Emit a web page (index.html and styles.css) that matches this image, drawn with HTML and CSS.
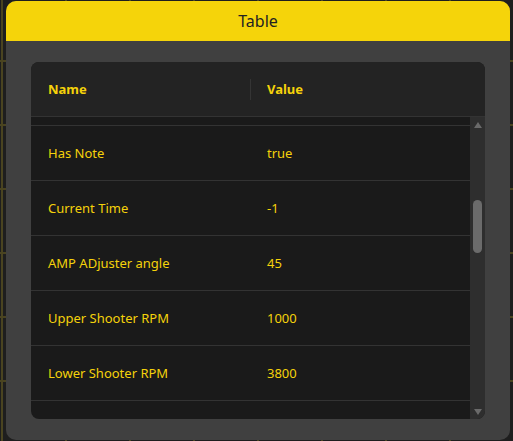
FILE: index.html
```html
<!DOCTYPE html>
<html>
<head>
<meta charset="utf-8">
<link rel="stylesheet" href="styles.css">
</head>
<body>
<div class="window">
  <div class="titlebar">Table</div>
  <div class="content">
    <div class="table">
      <div class="thead">
        <div class="cell name">Name</div>
        <div class="divider"></div>
        <div class="cell value">Value</div>
      </div>
      <div class="tbody">
        <div class="rows">
          <div class="rows-inner">
            <div class="row"></div>
            <div class="row"><div class="cell name">Has Note</div><div class="cell value">true</div></div>
            <div class="row"><div class="cell name">Current Time</div><div class="cell value">-1</div></div>
            <div class="row"><div class="cell name">AMP ADjuster angle</div><div class="cell value">45</div></div>
            <div class="row"><div class="cell name">Upper Shooter RPM</div><div class="cell value">1000</div></div>
            <div class="row"><div class="cell name">Lower Shooter RPM</div><div class="cell value">3800</div></div>
            <div class="row"></div>
          </div>
        </div>
        <div class="scrollbar">
          <div class="arrow up"></div>
          <div class="track"><div class="thumb"></div></div>
          <div class="arrow down"></div>
        </div>
      </div>
    </div>
  </div>
</div>
</body>
</html>
```
FILE: styles.css
```css
html, body {
  margin: 0;
  padding: 0;
}
body {
  width: 513px;
  height: 441px;
  overflow: hidden;
  background-color: #1e1e1e;
  background-image:
    linear-gradient(to right, #4a4420 0, #4a4420 2px, transparent 2px),
    linear-gradient(to bottom, #4a4420 0, #4a4420 2px, transparent 2px);
  background-size: 64px 64px, 64px 64px;
  background-position: 1px 0, 0 60px;
  font-family: "Noto Sans", "Open Sans", sans-serif;
}
.window {
  margin: 1px 0 0 6px;
  width: 504px;
  height: 439px;
  border-radius: 10px;
  background: #404040;
  overflow: hidden;
  display: flex;
  flex-direction: column;
}
.titlebar {
  height: 40px;
  flex: none;
  background: #f5d40a;
  color: #222222;
  font-size: 16px;
  display: flex;
  align-items: center;
  justify-content: center;
}
.content {
  flex: 1;
  padding: 21px 25px 21px 25px;
  display: flex;
}
.table {
  flex: 1;
  height: 357px;
  border-radius: 8px;
  overflow: hidden;
  background: #1a1a1a;
  display: flex;
  flex-direction: column;
}
.thead {
  height: 54px;
  flex: none;
  background: #232323;
  border-bottom: 1px solid #333333;
  display: flex;
  align-items: center;
}
.cell {
  padding-left: 17px;
  font-size: 13px;
  color: #f5d20a;
  box-sizing: border-box;
}
.cell.name {
  width: 219px;
}
.thead .cell {
  font-weight: 700;
}
.thead .cell.value {
  padding-left: 16px;
}
.divider {
  width: 1px;
  height: 21px;
  background: #343434;
}
.tbody {
  flex: 1;
  display: flex;
  min-height: 0;
}
.rows {
  flex: 1;
  overflow: hidden;
}
.rows-inner {
  margin-top: -46px;
}
.row {
  height: 54px;
  border-bottom: 1px solid #333333;
  display: flex;
  align-items: center;
}
.scrollbar {
  width: 15px;
  flex: none;
  background: #2e2e2e;
  display: flex;
  flex-direction: column;
  align-items: center;
}
.arrow {
  width: 0;
  height: 0;
  border-left: 4.5px solid transparent;
  border-right: 4.5px solid transparent;
}
.arrow.up {
  margin-top: 5px;
  border-bottom: 6px solid #6a6a6a;
}
.arrow.down {
  margin-bottom: 4px;
  border-top: 6px solid #6a6a6a;
}
.track {
  flex: 1;
  width: 9px;
}
.thumb {
  margin-top: 72px;
  width: 9px;
  height: 53px;
  border-radius: 5px;
  background: #6b6b6b;
}
```
